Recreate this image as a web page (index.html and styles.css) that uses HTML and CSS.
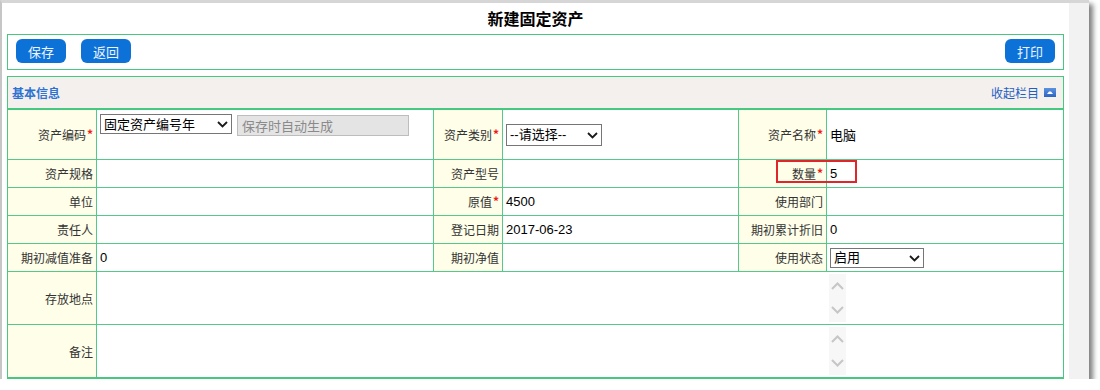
FILE: index.html
```html
<!DOCTYPE html>
<html lang="zh-CN">
<head>
  <meta charset="UTF-8">
  <title>新建固定资产</title>
  <link rel="stylesheet" href="styles.css">
</head>
<body>
  <div class="window">
    <div class="page">
      <h1 class="title">新建固定资产</h1>

      <div class="toolbar">
        <div class="btn-group">
          <button class="btn">保存</button>
          <button class="btn">返回</button>
        </div>
        <button class="btn">打印</button>
      </div>

      <div class="panel">
        <div class="panel-head">
          <span class="panel-title">基本信息</span>
          <a class="collapse">收起栏目
            <svg width="12" height="9" viewBox="0 0 12 9">
              <defs>
                <linearGradient id="ico" x1="0" y1="0" x2="0" y2="1">
                  <stop offset="0" stop-color="#5b93e0"/>
                  <stop offset="1" stop-color="#2d63c2"/>
                </linearGradient>
              </defs>
              <rect x="0" y="0" width="12" height="9" fill="url(#ico)"/>
              <path d="M3 6 L5 3.5 L7 3.5 L9 6 Z" fill="#fff"/>
            </svg>
          </a>
        </div>

        <div class="form-grid">
          <div class="lbl">资产编码<i>*</i></div>
          <div class="val top">
            <span class="sel w132">
              <select><option>固定资产编号年</option></select>
              <svg class="arrow" width="11" height="7" viewBox="0 0 11 7"><polyline points="1,1 5.5,5.5 10,1" fill="none" stroke="#1a1a1a" stroke-width="1.8"/></svg>
            </span>
            <input class="readonly" type="text" value="保存时自动生成" disabled>
          </div>
          <div class="lbl">资产类别<i>*</i></div>
          <div class="val">
            <span class="sel w96 tall">
              <select><option>--请选择--</option></select>
              <svg class="arrow" width="11" height="7" viewBox="0 0 11 7"><polyline points="1,1 5.5,5.5 10,1" fill="none" stroke="#1a1a1a" stroke-width="1.8"/></svg>
            </span>
          </div>
          <div class="lbl">资产名称<i>*</i></div>
          <div class="val">电脑</div>

          <div class="lbl">资产规格</div>
          <div class="val"></div>
          <div class="lbl">资产型号</div>
          <div class="val"></div>
          <div class="lbl">数量<i>*</i></div>
          <div class="val">5</div>

          <div class="lbl">单位</div>
          <div class="val"></div>
          <div class="lbl">原值<i>*</i></div>
          <div class="val">4500</div>
          <div class="lbl">使用部门</div>
          <div class="val"></div>

          <div class="lbl">责任人</div>
          <div class="val"></div>
          <div class="lbl">登记日期</div>
          <div class="val">2017-06-23</div>
          <div class="lbl">期初累计折旧</div>
          <div class="val">0</div>

          <div class="lbl">期初减值准备</div>
          <div class="val">0</div>
          <div class="lbl">期初净值</div>
          <div class="val"></div>
          <div class="lbl">使用状态</div>
          <div class="val">
            <span class="sel w94">
              <select><option>启用</option></select>
              <svg class="arrow" width="11" height="7" viewBox="0 0 11 7"><polyline points="1,1 5.5,5.5 10,1" fill="none" stroke="#1a1a1a" stroke-width="1.8"/></svg>
            </span>
          </div>

          <div class="lbl">存放地点</div>
          <div class="val wide">
            <div class="memo">
              <div class="memo-text"></div>
              <div class="memo-bar">
                <svg width="17" height="48" viewBox="0 0 17 48"><polyline points="3,15 8.5,9.5 14,15" fill="none" stroke="#c6c6c6" stroke-width="2"/><polyline points="3,33 8.5,38.5 14,33" fill="none" stroke="#c6c6c6" stroke-width="2"/></svg>
              </div>
            </div>
          </div>

          <div class="lbl">备注</div>
          <div class="val wide">
            <div class="memo">
              <div class="memo-text"></div>
              <div class="memo-bar">
                <svg width="17" height="48" viewBox="0 0 17 48"><polyline points="3,15 8.5,9.5 14,15" fill="none" stroke="#c6c6c6" stroke-width="2"/><polyline points="3,33 8.5,38.5 14,33" fill="none" stroke="#c6c6c6" stroke-width="2"/></svg>
              </div>
            </div>
          </div>

          <div class="mark"></div>
        </div>
      </div>
    </div>
    <div class="vscroll"></div>
  </div>
</body>
</html>
```

FILE: styles.css
```css
body {
  margin: 0;
  background: #fff;
  font-family: "Liberation Sans", "Noto Sans CJK SC", sans-serif;
  font-size: 12px;
  color: #000;
}

.window {
  display: flex;
  width: 1087px;
  height: 376px;
  border-top: 3px solid #d6d6d6;
  border-left: 2px solid #c6c6c6;
  box-shadow: 4px 4px 5px rgba(0, 0, 0, 0.5);
}
.page {
  width: 1057px;
  padding: 0 5px;
  background: #fff;
}
.vscroll {
  width: 20px;
  background: #f2f2f2;
}

.title {
  margin: 0;
  height: 31px;
  line-height: 31px;
  text-align: center;
  font-size: 16px;
  font-weight: bold;
  font-family: "Noto Sans CJK SC", sans-serif;
}

.toolbar {
  display: flex;
  justify-content: space-between;
  align-items: flex-start;
  height: 29px;
  padding: 4px 8px 1px 8px;
  border: 1px solid #47c880;
}
.btn-group {
  display: flex;
  gap: 15px;
}
.btn {
  width: 50px;
  height: 24px;
  padding: 0;
  border: none;
  border-radius: 6px;
  background: #0d72d8;
  color: #eef4ff;
  font-size: 13px;
  font-family: "Noto Sans CJK SC", sans-serif;
  cursor: pointer;
}

.panel {
  margin-top: 6px;
  border: 1px solid #47c880;
  border-bottom-width: 2px;
}
.panel-head {
  display: flex;
  justify-content: space-between;
  align-items: center;
  height: 31px;
  padding: 0 7px 0 4px;
  background: #f3f0ed;
  border-bottom: 2px solid #47c880;
}
.panel-title {
  color: #2e72d2;
  font-weight: bold;
  font-family: "Noto Sans CJK SC", sans-serif;
}
.collapse {
  display: flex;
  align-items: center;
  gap: 5px;
  color: #1f5fc4;
  font-family: "Noto Sans CJK SC", sans-serif;
  cursor: pointer;
}

.form-grid {
  position: relative;
  display: grid;
  grid-template-columns: 88px 336px 68px 235px 87px 236px;
  grid-template-rows: 49px 27px 27px 27px 27px 52px 52px;
  gap: 1px;
  background: #55c98a;
}
.lbl {
  display: flex;
  justify-content: flex-end;
  align-items: center;
  padding-right: 3px;
  background: #fefee9;
  color: #333;
  font-family: "Noto Sans CJK SC", sans-serif;
  white-space: nowrap;
}
.lbl i {
  font-style: normal;
  font-weight: bold;
  color: #f01818;
  margin-left: 1px;
  position: relative;
  top: -1px;
}
.val {
  display: flex;
  align-items: center;
  padding-left: 3px;
  background: #fff;
  font-size: 13px;
}
.val.top {
  align-items: flex-start;
  padding-top: 4px;
  gap: 5px;
}
.val.wide {
  grid-column: span 5;
  align-items: flex-start;
  padding-top: 2px;
}

.sel {
  position: relative;
  display: inline-block;
}
.sel select {
  appearance: none;
  -webkit-appearance: none;
  display: block;
  width: 100%;
  height: 20px;
  margin: 0;
  padding: 0 18px 0 3px;
  border: 1px solid #767676;
  border-radius: 0;
  background: #fff;
  color: #000;
  font-size: 13px;
  font-family: "Liberation Sans", "Noto Sans CJK SC", sans-serif;
}
.sel .arrow {
  position: absolute;
  right: 4px;
  top: 7px;
  pointer-events: none;
}
.sel.tall select {
  height: 22px;
}
.sel.tall .arrow {
  top: 8px;
}
.w132 { width: 132px; }
.w96 { width: 96px; }
.w94 { width: 94px; }

.readonly {
  width: 172px;
  height: 21px;
  margin: 1px 0 0;
  padding: 0 4px;
  box-sizing: border-box;
  border: 1px solid #bdbdbd;
  background: #e4e4e4;
  color: #8a8a8a;
  font-size: 13px;
  font-family: "Noto Sans CJK SC", sans-serif;
}

.memo {
  display: flex;
  width: 746px;
  height: 48px;
}
.memo-text {
  flex: 1;
}
.memo-bar {
  width: 17px;
  background: #f7f7f7;
}
.memo-bar svg {
  display: block;
}

.mark {
  position: absolute;
  left: 768px;
  top: 50px;
  width: 77px;
  height: 19px;
  border: 2px solid #e0262a;
  pointer-events: none;
}
```
